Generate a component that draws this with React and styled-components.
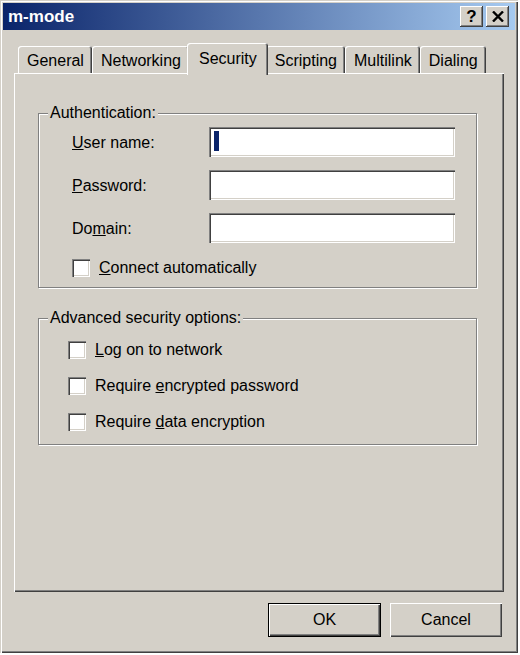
import styled, { createGlobalStyle } from "styled-components";

const GlobalStyle = createGlobalStyle`
  html, body {
    margin: 0;
    background: #ffffff;
  }
  body {
    font-family: "Liberation Sans", Arial, sans-serif;
    font-size: 16px;
    color: #000;
  }
`;

const FACE = "#d4d0c8";

const raised = `
  box-shadow: inset 1px 1px 0 #ffffff, inset -1px -1px 0 #404040,
    inset -2px -2px 0 #808080;
`;

const sunken = `
  box-shadow: inset 1px 1px 0 #808080, inset 2px 2px 0 #404040,
    inset -1px -1px 0 #ffffff, inset -2px -2px 0 ${FACE};
`;

const Window = styled.div`
  width: 518px;
  height: 653px;
  box-sizing: border-box;
  padding: 3px;
  background: ${FACE};
  display: flex;
  flex-direction: column;
  box-shadow: inset 1px 1px 0 ${FACE}, inset 2px 2px 0 #ffffff,
    inset -1px -1px 0 #404040, inset -2px -2px 0 #808080;
`;

const TitleBar = styled.div`
  height: 27px;
  flex: none;
  display: flex;
  align-items: center;
  padding: 0 6px 0 5px;
  background: linear-gradient(to right, #0a246a, #a6caf0);
  color: #fff;
  font-weight: bold;
  font-size: 17px;
`;

const TitleButtons = styled.div`
  margin-left: auto;
  display: flex;
  gap: 3px;
`;

const TitleButton = styled.div`
  width: 23px;
  height: 21px;
  background: ${FACE};
  display: flex;
  align-items: center;
  justify-content: center;
  color: #000;
  font-size: 17px;
  font-weight: bold;
  box-shadow: inset -1px -1px 0 #404040, inset 1px 1px 0 #ffffff,
    inset -2px -2px 0 #808080;
`;

const Body = styled.div`
  flex: none;
  padding: 13px 11px 13px 11px;
  display: flex;
  flex-direction: column;
`;

const TabStrip = styled.div`
  height: 30px;
  display: flex;
  align-items: flex-end;
  padding-left: 4px;
`;

const Tab = styled.div`
  position: relative;
  box-sizing: border-box;
  height: ${(p) => (p.$active ? "32px" : "27px")};
  margin: ${(p) => (p.$active ? "0 -2px -2px" : "0")};
  padding: ${(p) => (p.$active ? "0 11px 1px 12px" : "2px 8px 0 9px")};
  z-index: ${(p) => (p.$active ? 2 : 0)};
  display: flex;
  align-items: center;
  background: ${FACE};
  border-radius: 3px 3px 0 0;
  box-shadow: inset 1px 1px 0 #ffffff, inset -1px 0 0 #404040,
    inset -2px 0 0 #808080;
  white-space: nowrap;
`;

const Panel = styled.div`
  position: relative;
  z-index: 1;
  height: 519px;
  box-sizing: border-box;
  padding: 40px 0 0 24px;
  ${raised}
`;

const GroupBox = styled.div`
  position: relative;
  width: 439px;
  box-sizing: border-box;
  border: 1px solid #808080;
  box-shadow: 1px 1px 0 #ffffff, inset 1px 1px 0 #ffffff;
  padding: ${(p) => p.$pad};
  margin-top: ${(p) => p.$top || "0"};
  display: flex;
  flex-direction: column;
  gap: ${(p) => p.$gap};
`;

const Legend = styled.span`
  position: absolute;
  left: 9px;
  top: -10px;
  padding: 0 2px;
  line-height: 18px;
  background: ${FACE};
`;

const FieldRow = styled.div`
  display: flex;
  align-items: center;
`;

const Label = styled.span`
  width: 137px;
  padding-top: 1px;
`;

const TextBox = styled.div`
  width: 246px;
  height: 30px;
  box-sizing: border-box;
  background: #fff;
  padding: 4px 5px;
  ${sunken}
`;

const Caret = styled.div`
  width: 5px;
  height: 20px;
  background: #0a246a;
`;

const CheckRow = styled.div`
  display: flex;
  align-items: center;
  gap: 9px;
  line-height: 18px;
  margin-top: ${(p) => p.$top || "0"};
`;

const CheckBox = styled.div`
  width: 18px;
  height: 18px;
  box-sizing: border-box;
  background: #fff;
  ${sunken}
`;

const Footer = styled.div`
  display: flex;
  justify-content: flex-end;
  gap: 9px;
  padding: 11px 2px 0 0;
`;

const Button = styled.div`
  width: ${(p) => (p.$default ? "113px" : "112px")};
  height: 34px;
  box-sizing: border-box;
  display: flex;
  align-items: center;
  justify-content: center;
  border: ${(p) => (p.$default ? "1px solid #000" : "none")};
  ${raised}
`;

export default function App() {
  return (
    <>
      <GlobalStyle />
      <Window>
        <TitleBar>
          m-mode
          <TitleButtons>
            <TitleButton>?</TitleButton>
            <TitleButton>
              <svg width="12" height="11" viewBox="0 0 12 11">
                <path d="M1 0.5 L11 10.5 M11 0.5 L1 10.5" stroke="#000" strokeWidth="2.4" />
              </svg>
            </TitleButton>
          </TitleButtons>
        </TitleBar>
        <Body>
          <TabStrip>
            <Tab>General</Tab>
            <Tab>Networking</Tab>
            <Tab $active>Security</Tab>
            <Tab>Scripting</Tab>
            <Tab>Multilink</Tab>
            <Tab>Dialing</Tab>
          </TabStrip>
          <Panel>
            <GroupBox $pad="13px 0 10px 33px" $gap="13px">
              <Legend>Authentication:</Legend>
              <FieldRow>
                <Label>
                  <u>U</u>ser name:
                </Label>
                <TextBox>
                  <Caret />
                </TextBox>
              </FieldRow>
              <FieldRow>
                <Label>
                  <u>P</u>assword:
                </Label>
                <TextBox />
              </FieldRow>
              <FieldRow>
                <Label>
                  Do<u>m</u>ain:
                </Label>
                <TextBox />
              </FieldRow>
              <CheckRow $top="3px">
                <CheckBox />
                <span>
                  <u>C</u>onnect automatically
                </span>
              </CheckRow>
            </GroupBox>
            <GroupBox $pad="22px 0 13px 29px" $gap="18px" $top="30px">
              <Legend>Advanced security options:</Legend>
              <CheckRow>
                <CheckBox />
                <span>
                  <u>L</u>og on to network
                </span>
              </CheckRow>
              <CheckRow>
                <CheckBox />
                <span>
                  Require <u>e</u>ncrypted password
                </span>
              </CheckRow>
              <CheckRow>
                <CheckBox />
                <span>
                  Require <u>d</u>ata encryption
                </span>
              </CheckRow>
            </GroupBox>
          </Panel>
          <Footer>
            <Button $default>OK</Button>
            <Button>Cancel</Button>
          </Footer>
        </Body>
      </Window>
    </>
  );
}
